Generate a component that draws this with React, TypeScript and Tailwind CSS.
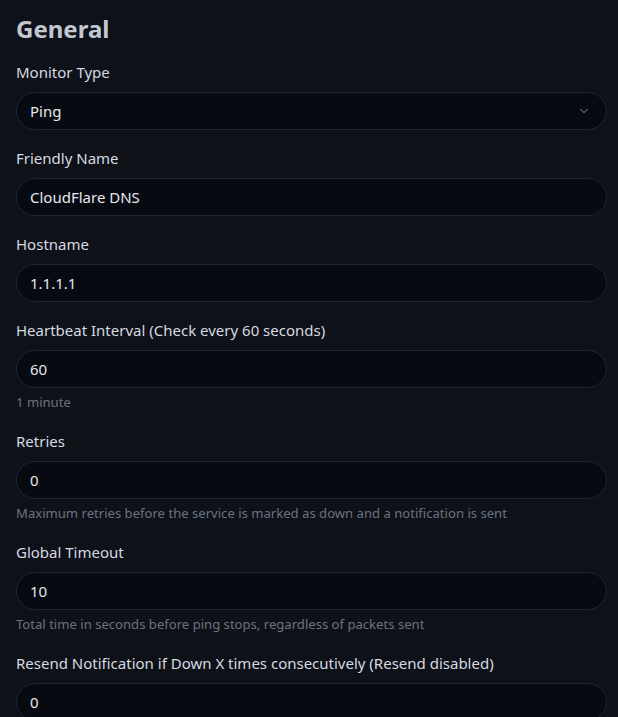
import { ChevronDown } from "lucide-react";

type Field = {
    label: string;
    value: string;
    help?: string;
    select?: boolean;
};

const fields: Field[] = [
    { label: "Monitor Type", value: "Ping", select: true },
    { label: "Friendly Name", value: "CloudFlare DNS" },
    { label: "Hostname", value: "1.1.1.1" },
    { label: "Heartbeat Interval (Check every 60 seconds)", value: "60", help: "1 minute" },
    {
        label: "Retries",
        value: "0",
        help: "Maximum retries before the service is marked as down and a notification is sent",
    },
    {
        label: "Global Timeout",
        value: "10",
        help: "Total time in seconds before ping stops, regardless of packets sent",
    },
    { label: "Resend Notification if Down X times consecutively (Resend disabled)", value: "0" },
];

export default function App() {
    return (
        <div
            className="h-[717px] overflow-hidden bg-[#0e1118] pl-4 pr-[11px] pt-[14px]"
            style={{ fontFamily: '"Noto Sans", "Open Sans", sans-serif' }}
        >
            <h2 className="mb-[17px] text-[24px] font-bold leading-[29px] text-[#c2c8d1]">General</h2>

            {fields.map((f) => (
                <div key={f.label} className="mb-4">
                    <div className="mb-2 text-[15px] leading-6 text-[#d6dae0]">{f.label}</div>
                    <div className="flex h-[38px] items-center justify-between rounded-full border border-[#1d2634] bg-[#070a10] pl-[13px] pr-[15px]">
                        <span className="text-[15px] text-[#e6e9ee]">{f.value}</span>
                        {f.select && <ChevronDown className="h-[14px] w-[14px] text-[#4f5866]" strokeWidth={2} />}
                    </div>
                    {f.help && (
                        <div className="mt-1 text-[13.1px] leading-[21px] text-[#6b7380]">{f.help}</div>
                    )}
                </div>
            ))}
        </div>
    );
}
